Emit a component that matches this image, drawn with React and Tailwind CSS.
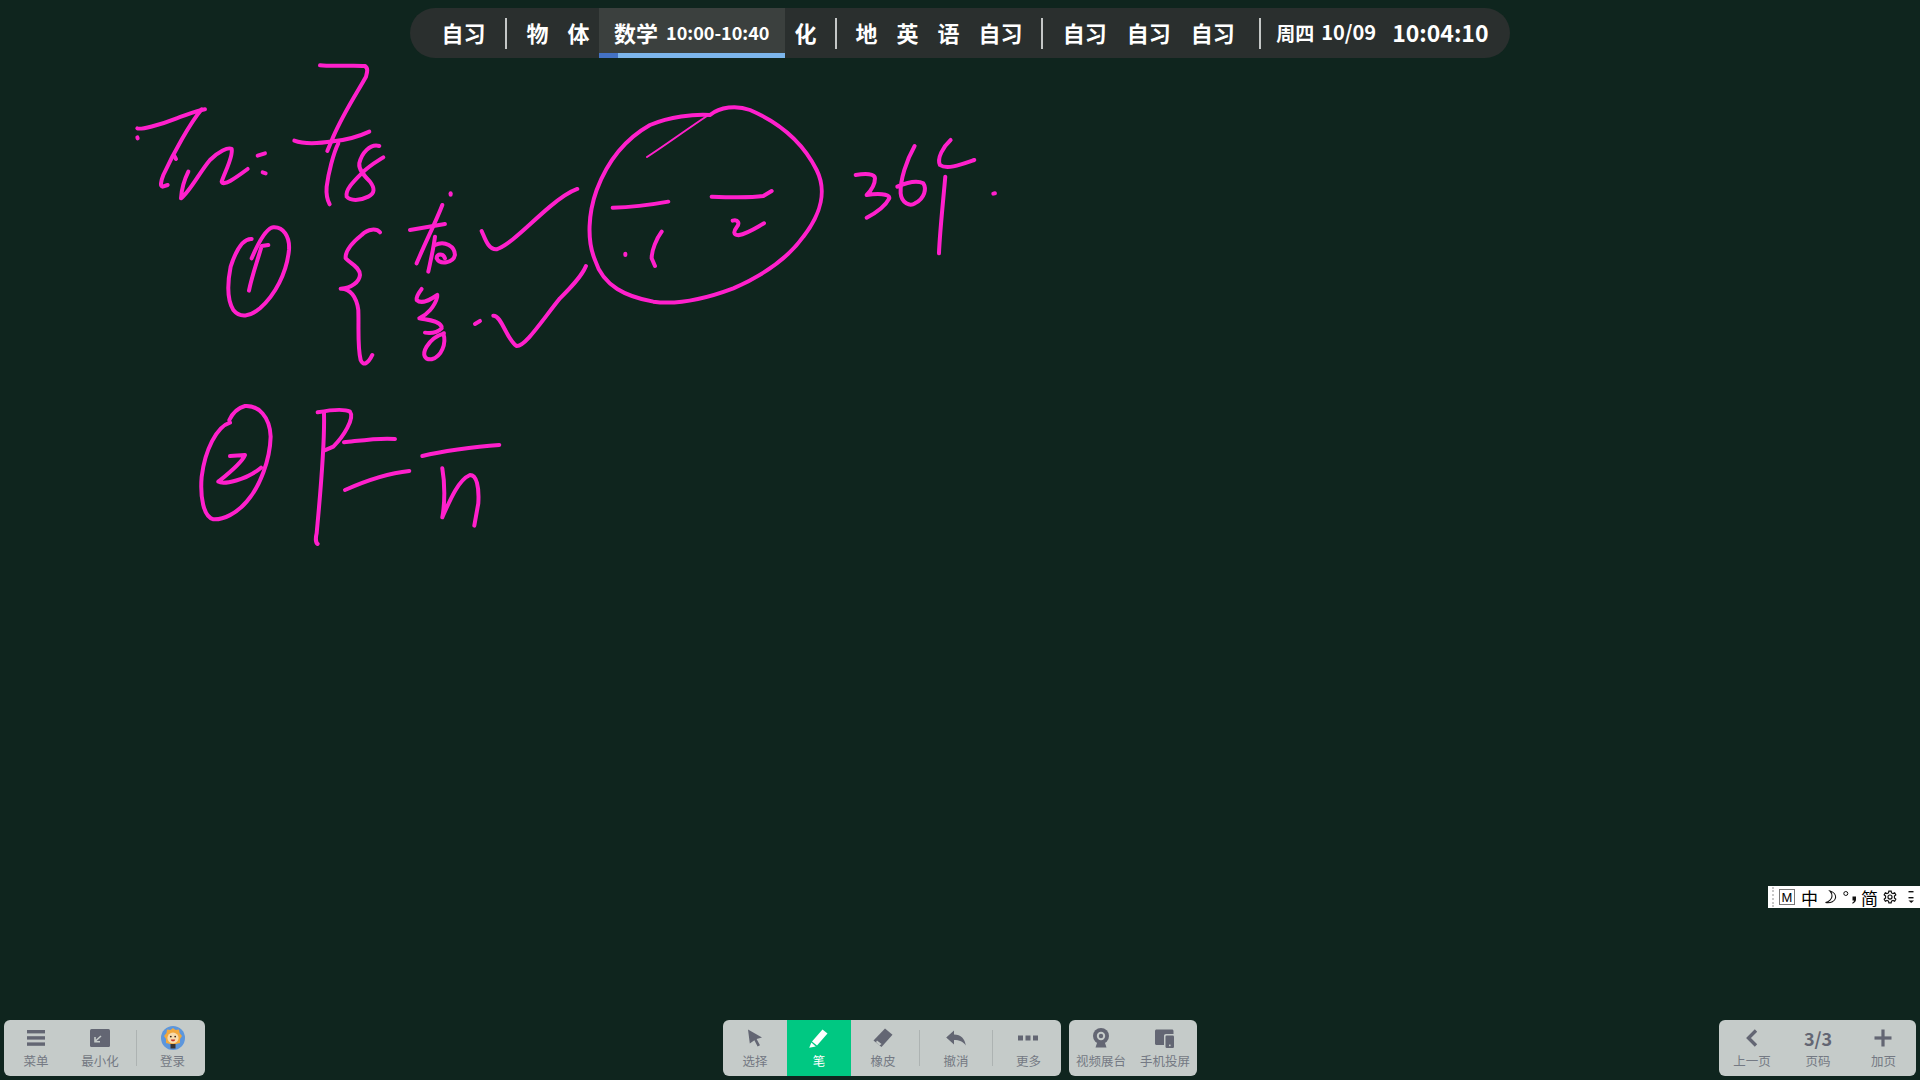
const CJK = { fontFamily: '"Noto Sans CJK SC", "Noto Sans", sans-serif' };

// whiteboard strokes, each group in its own local coordinates (3x of page pixels)
const INK_A = [
  "M52 235 C60 240 120 225 170 205 C200 195 230 182 255 178",
  "M245 178 C210 220 160 310 130 375 C122 395 120 410 128 410 L143 405",
  "M205 365 C195 385 185 415 183 445 C210 425 240 365 270 330 C295 305 325 290 335 297 C340 320 315 365 305 395 C310 410 345 385 383 357",
  "M413 317 L435 310",
  "M428 367 L437 370",
  "M52 262 L53 265",
  "M163 318 L168 327",
  "M600 46 C640 50 700 45 735 48 C745 55 742 65 738 80 C710 130 670 190 640 260 L622 303",
  "M523 272 C550 282 600 280 640 274 C680 270 720 258 748 245",
  "M655 280 C640 310 625 370 620 410 C618 435 622 450 629 463",
  "M778 288 C750 280 725 310 718 340 C715 360 735 380 750 395 C765 415 765 430 745 440 C720 453 690 453 680 440 C675 420 700 395 725 370 C750 345 770 335 790 322",
  "M992 430 L992 434",
  "M395 567 C365 565 345 610 332 650 C322 700 322 750 340 780 C360 805 390 800 420 775 C465 735 500 670 507 600 C510 560 490 530 460 532 C435 535 410 590 395 625",
  "M445 585 L425 588 C410 640 395 680 387 722",
  "M780 547 C770 535 745 535 725 555 C700 575 675 600 677 625 C690 640 720 650 720 675 C718 695 695 715 662 716 C690 715 710 740 715 780 C717 830 712 890 722 930 C730 950 745 940 757 915",
  "M870 540 L975 522",
  "M967 465 C950 510 915 580 890 640",
  "M945 560 C940 600 930 640 925 665",
  "M945 585 C975 570 1005 590 1005 615 C1000 640 960 645 950 625 C950 610 970 610 975 625",
  "M905 717 C895 730 888 740 890 750 C905 765 930 750 952 735",
  "M952 740 C945 770 920 795 898 805 C920 810 955 810 965 830",
  "M965 835 C950 850 930 850 915 848",
  "M970 850 C980 880 965 920 935 928 C915 930 905 915 920 890 C935 865 955 855 972 850",
  "M1065 822 L1080 813",
  "M1085 543 C1095 565 1105 600 1130 598 C1170 585 1230 520 1290 470 C1320 445 1350 425 1372 417",
  "M1120 797 C1145 795 1160 870 1190 888 C1215 890 1260 820 1320 745 C1350 715 1385 680 1398 648",
];

const INK_B = [
  "M450 75 C480 50 530 45 570 60 C640 90 720 140 770 240 C800 300 785 370 730 440 C680 510 600 560 520 595 C440 625 350 645 280 635 C200 620 130 590 105 510 C80 450 85 370 110 300 C140 220 190 150 270 105 C330 80 400 72 450 75",
  "M158 353 C210 352 270 345 325 335",
  "M455 320 C510 322 580 322 610 318 L635 303",
  "M196 491 L196 495",
  "M305 425 C290 445 275 480 275 505 L285 528",
  "M518 392 C535 388 540 400 530 412 C520 425 520 435 535 436 C565 430 590 412 612 400",
  "M887 255 C915 250 945 250 945 265 C945 285 930 305 920 315 C950 310 990 310 988 325 C975 350 945 370 920 383",
  "M1064 168 C1040 210 1020 270 1022 310 C1025 340 1050 350 1065 340 C1095 325 1100 295 1090 280 C1070 270 1035 280 1012 290",
  "M1172 150 C1150 170 1130 205 1140 225 C1160 240 1200 225 1243 210",
  "M1156 260 C1150 330 1140 420 1137 490",
  "M1300 311 L1305 310",
];

const INK_C = [
  "M150 128 C110 140 75 210 65 290 C60 350 70 410 100 418 C130 420 170 400 200 365 C240 320 270 240 272 170 C270 110 235 75 195 78 C170 85 155 105 148 120",
  "M150 228 L195 225 C185 250 140 285 115 305 C130 315 200 300 243 263",
  "M413 97 C440 92 490 85 510 95 C525 115 490 170 460 200 L432 212",
  "M432 100 C435 200 420 350 410 460 C405 480 410 490 413 492",
  "M492 187 C540 182 600 172 645 177",
  "M495 330 C540 310 620 280 688 273",
  "M727 228 C780 215 880 200 958 195",
  "M787 265 C795 310 795 370 787 412 C810 360 835 300 870 285 C890 285 898 320 895 370 L883 437",
];

function Ink() {
  const group = (paths, x, y) => (
    <g transform={`translate(${x} ${y}) scale(0.3333)`}>
      {paths.map((d) => (
        <path key={d} d={d} />
      ))}
    </g>
  );
  return (
    <svg
      className="absolute inset-0"
      width="1920"
      height="1080"
      fill="none"
      stroke="#ff20cc"
      strokeWidth="12"
      strokeLinecap="round"
      strokeLinejoin="round"
    >
      {group(INK_A, 120, 50)}
      {group(INK_B, 560, 90)}
      {group(INK_C, 180, 380)}
      <path d="M710 114 C690 127 667 144 647 157" strokeWidth="2" />
    </svg>
  );
}

function Lesson({ children }) {
  return <span className="px-[9.5px] whitespace-nowrap">{children}</span>;
}

function Divider({ className }) {
  return <span className={`w-[2px] h-[31px] translate-y-[1px] bg-[#c4c7c6] shrink-0 ${className}`} />;
}

function ScheduleBar() {
  return (
    <div
      className="flex items-center w-[1100px] h-[50px] mt-[8px] pl-[22px] pb-[2px] rounded-[25px] bg-[#2a2f2e] text-white text-[22px] leading-none font-bold overflow-hidden"
      style={CJK}
    >
      <Lesson>自习</Lesson>
      <Divider className="ml-[10px] mr-[10px]" />
      <Lesson>物</Lesson>
      <Lesson>体</Lesson>
      <div className="relative flex items-center self-stretch w-[186px] pl-[15px] pb-[2px] -mb-[2px] bg-[#3b403e] whitespace-nowrap">
        数学
        <span className="ml-[8px] text-[18px]">10:00-10:40</span>
        <div className="absolute left-0 right-0 bottom-0 flex h-[5px] bg-[#7db6ec]">
          <div className="w-[19px] bg-[#4472c4]" />
        </div>
      </div>
      <Lesson>化</Lesson>
      <Divider className="mx-[9px]" />
      <Lesson>地</Lesson>
      <Lesson>英</Lesson>
      <Lesson>语</Lesson>
      <Lesson>自习</Lesson>
      <Divider className="ml-[9px] mr-[10px]" />
      <Lesson>自习</Lesson>
      <span className="w-[1px]" />
      <Lesson>自习</Lesson>
      <span className="w-[1px]" />
      <Lesson>自习</Lesson>
      <Divider className="ml-[15px] mr-[16px]" />
      <span className="ml-[-1px] text-[19px] whitespace-nowrap">周四</span>
      <span className="ml-[7px] text-[20px] whitespace-nowrap">10/09</span>
      <span className="ml-[16px] text-[23px] whitespace-nowrap">10:04:10</span>
    </div>
  );
}

const ICON = "#636673";

function MenuIcon() {
  return (
    <svg width="20" height="18" viewBox="0 0 20 18" fill={ICON}>
      <rect x="1" y="1" width="18" height="3.4" />
      <rect x="1" y="7.2" width="18" height="3.4" />
      <rect x="1" y="13.4" width="18" height="3.4" />
    </svg>
  );
}

function MinimizeIcon() {
  return (
    <svg width="20" height="18" viewBox="0 0 20 18">
      <rect width="20" height="18" rx="1.5" fill={ICON} />
      <path d="M11 7 L5.5 12 M5 8 V12.8 H10" fill="none" stroke="#c5cbc9" strokeWidth="1.6" />
    </svg>
  );
}

function LionIcon() {
  return (
    <svg width="24" height="24" viewBox="0 0 24 24">
      <circle cx="12" cy="12" r="12" fill="#5c96dc" />
      <path d="M12 2 L14.5 4 L18 3.5 L18.5 7 L21 10 L19 13 L19 17 L15 18 H9 L5 17 L5 13 L3 10 L5.5 7 L6 3.5 L9.5 4 Z" fill="#f2a83c" />
      <ellipse cx="12" cy="12" rx="5.6" ry="5.4" fill="#f8dcae" />
      <circle cx="9.8" cy="10.6" r="0.9" fill="#3a2a20" />
      <circle cx="14.2" cy="10.6" r="0.9" fill="#3a2a20" />
      <path d="M9.8 13.4 H14.2 C14 16 10 16 9.8 13.4 Z" fill="#c8342c" />
      <rect x="9.5" y="18" width="5" height="4.5" fill="#3b3330" />
    </svg>
  );
}

function CursorIcon() {
  return (
    <svg width="16" height="18" viewBox="0 0 16 18" fill={ICON}>
      <path d="M1 0.5 L15 8.5 L9.6 10 L13 16.3 L10.6 17.6 L7.4 11.2 L2.8 14.6 Z" />
    </svg>
  );
}

function PenIcon() {
  return (
    <svg width="19" height="19" viewBox="0 0 19 19" fill="#fff">
      <path d="M13.5 0.5 L18.5 4.5 L8 16.6 L3 12.6 Z" />
      <path d="M2.4 13.6 L6.8 17.4 L0.2 18.8 Z" />
    </svg>
  );
}

function EraserIcon() {
  return (
    <svg width="20" height="20" viewBox="0 0 20 20" fill={ICON}>
      <path d="M12 0.5 L19.5 6.8 L8.5 19 L0.5 12.5 Z" />
      <path d="M4 12.4 L8.6 16.1 L6.4 17.4 L3 14.2 Z" fill="#c5cbc9" />
    </svg>
  );
}

function UndoIcon() {
  return (
    <svg width="20" height="16" viewBox="0 0 20 16" fill={ICON}>
      <path d="M8 0.5 V4.5 C15 4.5 19 9 19.8 15.5 C17 11.5 13.5 10 8 10 V14.5 L0.2 7.5 Z" />
    </svg>
  );
}

function DotsIcon() {
  return (
    <svg width="20" height="6" viewBox="0 0 20 6" fill={ICON}>
      <rect x="0" y="0.5" width="5" height="5" />
      <rect x="7.5" y="0.5" width="5" height="5" />
      <rect x="15" y="0.5" width="5" height="5" />
    </svg>
  );
}

function WebcamIcon() {
  return (
    <svg width="18" height="20" viewBox="0 0 18 20" fill={ICON}>
      <circle cx="9" cy="8" r="8" />
      <circle cx="9" cy="8" r="4.2" fill="#c5cbc9" />
      <circle cx="9" cy="8" r="2.2" />
      <path d="M5 15 H13 L14.5 19.5 H3.5 Z" />
    </svg>
  );
}

function DevicesIcon() {
  return (
    <svg width="19" height="19" viewBox="0 0 19 19" fill={ICON}>
      <path d="M1.5 0.5 H17 C17.8 0.5 18.5 1.2 18.5 2 V5 H11 C9.7 5 9 5.8 9 7 V16 H1.5 C0.7 16 0 15.3 0 14.5 V2 C0 1.2 0.7 0.5 1.5 0.5 Z" />
      <rect x="10.5" y="6.5" width="8.5" height="12.5" rx="1.2" />
      <rect x="14" y="15.6" width="1.6" height="1.6" fill="#c5cbc9" />
    </svg>
  );
}

function ChevronIcon() {
  return (
    <svg width="12" height="18" viewBox="0 0 12 18" fill="none" stroke={ICON} strokeWidth="3.4">
      <path d="M10 1.5 L2.5 9 L10 16.5" />
    </svg>
  );
}

function PlusIcon() {
  return (
    <svg width="18" height="18" viewBox="0 0 18 18" fill={ICON}>
      <rect x="7.4" y="0.5" width="3.2" height="17" />
      <rect x="0.5" y="7.4" width="17" height="3.2" />
    </svg>
  );
}

function ToolItem({ icon, label, width = "w-[64px]", active = false }) {
  return (
    <div
      className={`flex flex-col items-center shrink-0 h-full ${width} ${
        active ? "bg-[#00c882] text-white" : "text-[#747983]"
      }`}
    >
      <div className="flex items-center justify-center h-[24px] mt-[6px]">{icon}</div>
      <span className="mt-[3px] text-[12.5px] leading-[15px] whitespace-nowrap">{label}</span>
    </div>
  );
}

function ToolDivider({ className = "" }) {
  return <span className={`w-px h-[36px] self-center bg-[#adb3b2] shrink-0 ${className}`} />;
}

function Panel({ children }) {
  return (
    <div className="flex h-[56px] rounded-[6px] bg-[#c5cbc9] overflow-hidden" style={CJK}>
      {children}
    </div>
  );
}

function ImeBar() {
  return (
    <div
      className="absolute right-0 top-[886px] flex items-center w-[152px] h-[22px] bg-white text-black text-[17px] leading-none"
      style={CJK}
    >
      <span className="ml-[4px] h-[20px] border-l-2 border-dotted border-[#c8c8c8]" />
      <span
        className="flex items-center justify-center ml-[5px] w-[16px] h-[16px] border border-[#777] text-[13px]"
        style={{ fontFamily: '"Liberation Sans", sans-serif' }}
      >
        M
      </span>
      <span className="ml-[6px]">中</span>
      <svg className="ml-[6px]" width="13" height="14" viewBox="0 0 13 14" fill="none" stroke="#111" strokeWidth="1.1">
        <path d="M6 1 C10 2 12 5 11.5 8 C11 11 7 13.5 1.5 12.5 C5 12 8 9 8 6 C8 4 7 2 6 1 Z" />
      </svg>
      <svg className="ml-[6px]" width="14" height="14" viewBox="0 0 14 14">
        <circle cx="2.8" cy="3.5" r="2" fill="none" stroke="#111" />
        <path d="M9.5 6.5 H13 V9.5 C13 11.5 11.5 13 9.5 13.8 L9.2 12.8 C10.3 12.3 11 11.5 11 10.5 H9.5 Z" fill="#111" />
      </svg>
      <span className="ml-[4px]">简</span>
      <svg className="ml-[5px]" width="14" height="14" viewBox="0 0 24 24" fill="none" stroke="#111" strokeWidth="2">
        <circle cx="12" cy="12" r="3.5" />
        <path d="M10 2 H14 L14.6 5 L17.2 6.2 L20 4.8 L22 8.2 L19.6 10.2 V13.8 L22 15.8 L20 19.2 L17.2 17.8 L14.6 19 L14 22 H10 L9.4 19 L6.8 17.8 L4 19.2 L2 15.8 L4.4 13.8 V10.2 L2 8.2 L4 4.8 L6.8 6.2 L9.4 5 Z" />
      </svg>
      <svg className="ml-[11px]" width="7" height="14" viewBox="0 0 7 14" fill="#111">
        <rect x="0.5" y="1" width="5" height="1.4" />
        <rect x="0.5" y="7" width="5" height="1.4" />
        <path d="M0.5 10.5 H6 L3.2 13 Z" />
      </svg>
    </div>
  );
}

export default function App() {
  return (
    <div className="relative flex flex-col items-center justify-between w-full h-screen overflow-hidden bg-[#0f251e]">
      <Ink />
      <div className="relative">
        <ScheduleBar />
      </div>
      <ImeBar />

      <div className="relative grid grid-cols-3 items-center w-full mb-[4px] px-[4px]">
        <div className="justify-self-start">
          <Panel>
            <ToolItem icon={<MenuIcon />} label="菜单" />
            <ToolItem icon={<MinimizeIcon />} label="最小化" />
            <ToolDivider className="ml-[4px]" />
            <ToolItem icon={<LionIcon />} label="登录" width="w-[68px] pl-[3px]" />
          </Panel>
        </div>

        <div className="justify-self-center flex gap-[8px]">
          <Panel>
            <ToolItem icon={<CursorIcon />} label="选择" />
            <ToolItem icon={<PenIcon />} label="笔" active />
            <ToolItem icon={<EraserIcon />} label="橡皮" width="w-[68px] pr-[4px]" />
            <ToolDivider />
            <ToolItem icon={<UndoIcon />} label="撤消" width="w-[72px]" />
            <ToolDivider />
            <ToolItem icon={<DotsIcon />} label="更多" width="w-[68px] pl-[3px]" />
          </Panel>
          <Panel>
            <ToolItem icon={<WebcamIcon />} label="视频展台" />
            <ToolItem icon={<DevicesIcon />} label="手机投屏" />
          </Panel>
        </div>

        <div className="justify-self-end">
          <Panel>
            <ToolItem icon={<ChevronIcon />} label="上一页" width="w-[66px]" />
            <ToolItem
              icon={<span className="text-[18px] font-bold leading-none text-[#636673]">3/3</span>}
              label="页码"
              width="w-[66px]"
            />
            <ToolItem icon={<PlusIcon />} label="加页" width="w-[65px]" />
          </Panel>
        </div>
      </div>
    </div>
  );
}
